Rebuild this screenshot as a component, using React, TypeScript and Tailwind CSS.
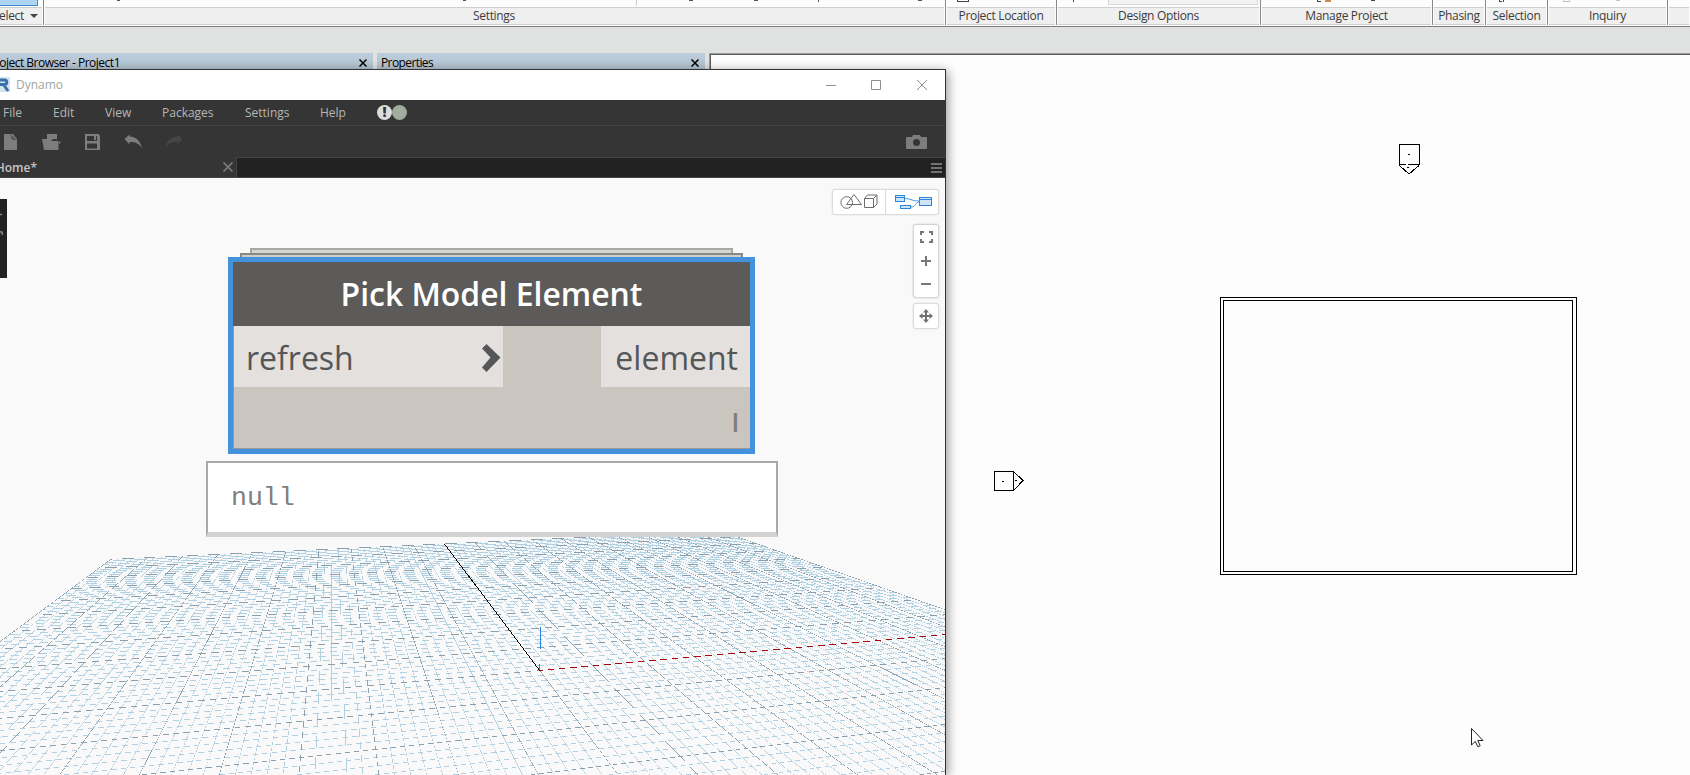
import React from "react";

type Vec3 = [number, number, number];

/* Projection of the ground plane: vanishing directions of both axes and the origin. */
const AXIS_X: Vec3 = [3645 * 0.1747, 395 * 0.1747, 0.1747];
const AXIS_Y: Vec3 = [332.5 * 0.8515, 395 * 0.8515, 0.8515];
const ORIGIN: Vec3 = [539.7, 670.5, 1];
const NEAR = 0.08;

function plane(x: number, y: number): Vec3 {
  const u = x / 50;
  const v = y / 50;
  return [0, 1, 2].map((i) => u * AXIS_X[i] + v * AXIS_Y[i] + ORIGIN[i]) as Vec3;
}

/* A line on the plane as a sliver; edges without smoothing turn it into a stippled line. */
function sliver(a: Vec3, b: Vec3, width: number): string {
  if (a[2] < NEAR && b[2] < NEAR) return "";
  const cut = (p: Vec3, q: Vec3): Vec3 => {
    const t = (NEAR - p[2]) / (q[2] - p[2]);
    return [0, 1, 2].map((i) => p[i] + (q[i] - p[i]) * t) as Vec3;
  };
  const s = a[2] < NEAR ? cut(a, b) : a;
  const e = b[2] < NEAR ? cut(b, a) : b;
  let p = [s[0] / s[2], s[1] / s[2]];
  let q = [e[0] / e[2], e[1] / e[2]];
  const dx = q[0] - p[0];
  const dy = q[1] - p[1];
  const len = Math.hypot(dx, dy);
  const shallow = Math.abs(dx) > Math.abs(dy);
  if (shallow ? dx < 0 : dy < 0) [p, q] = [q, p];
  const ox = shallow ? 0 : (-width * len) / Math.abs(dy);
  const oy = shallow ? (width * len) / Math.abs(dx) : 0;
  const f = (n: number) => n.toFixed(3);
  return `M${f(p[0] - ox / 2)} ${f(p[1] - oy / 2)}L${f(q[0] - ox / 2)} ${f(q[1] - oy / 2)}L${f(q[0] + ox / 2)} ${f(q[1] + oy / 2)}L${f(p[0] + ox / 2)} ${f(p[1] + oy / 2)}z`;
}

function gridLines(major: boolean): string {
  let d = "";
  for (let i = -50; i <= 50; i++) {
    if ((i % 5 === 0) !== major) continue;
    d += sliver(plane(i, 50), plane(i, -50), 0.55);
    d += sliver(plane(-50, i), plane(50, i), 0.55);
  }
  return d;
}

function GroundGrid() {
  return (
    <svg className="absolute left-0 top-0" width="945" height="597" viewBox="0 178 945 597" shapeRendering="crispEdges">
      <path d={gridLines(false)} fill="#b1d0e2" />
      <path d={gridLines(true)} fill="#8b9fac" />
      <path d={sliver(plane(0, 0), plane(0, 50), 0.82)} fill="#000" />
      <path d={sliver(plane(0, 0), plane(50, 0), 0.58)} fill="#a8060c" />
      <path d="M540 627h1v22h-1zM539 664h1v6h-1z" fill="#2b86e0" />
    </svg>
  );
}

function Ribbon() {
  const panels = [
    { label: "Settings", w: "w-[902px]", pad: "pr-[1px]" },
    { label: "Project Location", w: "w-[111px]", pad: "" },
    { label: "Design Options", w: "w-[204px]", pad: "" },
    { label: "Manage Project", w: "w-[172px]", pad: "" },
    { label: "Phasing", w: "w-[53px]", pad: "" },
    { label: "Selection", w: "w-[62px]", pad: "" },
    { label: "Inquiry", w: "w-[120px]", pad: "" },
    { label: "", w: "w-[23px]", pad: "" },
  ];
  return (
    <div className="relative flex h-[27px] border-b border-[#7d7d7d] bg-[#fdfdfd]">
      <div className="flex h-[25px] w-[44px] flex-col border-r border-[#888]">
        <div className="h-[7px]">
          <div className="h-[6px] w-[38px] border-b border-r border-[#3c8acb] bg-[#abd5f0]" />
        </div>
        <div className="mr-px flex h-[18px] items-center justify-end gap-[6px] overflow-hidden whitespace-nowrap border-y border-[#cfcfcf] bg-[#efefef] pr-[4px]">
          <span className="tracking-[-0.3px]">Select</span>
          <svg width="8" height="4" viewBox="0 0 8 4" className="shrink-0"><path d="M0 0h8L4 4z" fill="#444" /></svg>
        </div>
      </div>
      {panels.map((p) => (
        <div key={p.label} className={`flex h-[25px] shrink-0 flex-col justify-end border-r border-[#888] px-px ${p.w}`}>
          <div className={`flex h-[18px] items-center justify-center whitespace-nowrap border-y border-[#cfcfcf] bg-[#efefef] tracking-[-0.32px] ${p.pad}`}>{p.label}</div>
        </div>
      ))}
      <svg className="absolute left-0 top-0" width="1690" height="7" shapeRendering="crispEdges" fill="none">
        <path d="M117 .500h3M463 .500h3M689 .500h4M754 .500h4M818.500 0v2M918 .500h4" stroke="#555" />
        <path d="M636.500 0v6" stroke="#ccc" />
        <path d="M957.500 0v1.500h11v-1.500" stroke="#444" />
        <path d="M1073.500 0v2" stroke="#444" />
        <path d="M1108 0v4.500h149.500v-5" stroke="#d8d8d8" fill="#f3f3f3" />
        <path d="M1317.500 0v1.500h3M1371 .500h4M1499.500 0v1.500h2M1503 0v2" stroke="#444" />
        <path d="M1325 0h6v2h-6z" fill="#c98d4e" />
        <path d="M1563.500 0v1.500h6v-2M1616 .500h4" stroke="#c4c4b4" />
      </svg>
    </div>
  );
}

function CloseGlyph() {
  return (
    <svg width="8" height="8" viewBox="0 0 8 8" className="shrink-0"><path d="M.5.5l7 7M7.500.5l-7 7" stroke="#000" strokeWidth="1.500" /></svg>
  );
}

function DockRow() {
  return (
    <div className="flex min-h-0 flex-1">
      <div className="flex w-[373px] flex-col bg-[#f0f0f0]">
        <div className="flex h-[20px] items-center bg-gradient-to-b from-[#bccddc] to-[#b2c0ce]">
          <div className="flex w-[120px] justify-end overflow-hidden whitespace-nowrap tracking-[-0.5px] text-black">Project Browser - Project1</div>
          <div className="flex-1" />
          <div className="mr-[6px] flex"><CloseGlyph /></div>
        </div>
      </div>
      <div className="ml-[4px] w-[328px] bg-[#f0f0f0]">
        <div className="flex h-[20px] items-center justify-between bg-gradient-to-b from-[#bccddc] to-[#b2c0ce] pl-[4px] pr-[6px] text-black">
          <span className="tracking-[-0.6px]">Properties</span>
          <CloseGlyph />
        </div>
      </div>
      <div className="ml-[4px] flex flex-1 border-l border-t border-[#9a9a9a]">
        <DrawingView />
      </div>
    </div>
  );
}

function DrawingView() {
  return (
    <div className="relative flex-1 overflow-hidden border-l border-t border-[#5c5c5c] bg-[#fdfdfd]">
      <svg className="block" width="979" height="720" viewBox="711 55 979 720" fill="none" stroke="#000" shapeRendering="crispEdges">
        <rect x="1220.500" y="297.500" width="356" height="277" />
        <rect x="1223.500" y="300.500" width="349" height="271" />
        <rect x="1399.500" y="144.500" width="20" height="20" />
        <path d="M1399.500 165.500l9.500 8.500 10-8.500M1408 154.500h2M1407 167.500h2" />
        <path d="M1406 164.500h2" stroke="#fdfdfd" />
        <rect x="994.500" y="471.500" width="19" height="19" />
        <path d="M1014 472l9 8.500-9 9.500M1002 481.500h2M1015 480.500h2" />
        <path
          d="M1471.500 728.500v16.500l3.800-3.600 2.500 5.300 2.400-1-2.400-5.200h5.200z"
          fill="#fff"
          stroke="#222"
          shapeRendering="auto"
        />
      </svg>
    </div>
  );
}

function Toolbar() {
  return (
    <svg className="block" width="945" height="31" viewBox="0 126 945 31" fill="#7c7d7c">
      <path d="M4 134h9l4 5v11H4z" />
      <path d="M10 134l7 6h-5z" fill="#555" />
      <path d="M47 134h10v5h-4l-2 2h-4zM42 139h5l2 2h9.500v9H44zM59 142l2-.5-1.500 3z" />
      <path d="M85 134h13.500l1.500 1.500V150H85z" />
      <path d="M87 136h10v5H87zM87 143.500h10v5H87z" fill="#353535" />
      <path d="M94 136h2v4h-2z" />
      <path d="M124.500 139l5-4.500v2c6 .3 10.500 3.500 12.500 11.500-3-4.500-7-6.300-12.500-6v2.500z" />
      <path d="M182.500 139l-5-4.500v2c-6 .3-10.500 3.500-12.500 11.500 3-4.500 7-6.300 12.500-6v2.500z" fill="#454545" />
      <path d="M907 137h5l1-2h7l1 2h5q1 0 1 1v10q0 1-1 1h-19q-1 0-1-1v-10q0-1 1-1z" />
      <circle cx="916.500" cy="142.500" r="3.500" fill="#353535" />
    </svg>
  );
}

function ViewControls() {
  return (
    <div className="absolute right-[6px] top-[11px] flex flex-col items-end">
      <div className="flex h-[26px] w-[107px] rounded-[3px] border border-[#dcdcdc] bg-white shadow-[0_0_2px_rgba(0,0,0,0.12)]">
        <svg width="105" height="24" viewBox="833 190 105 24" fill="none" stroke="#6d6d6d">
          <circle cx="846.700" cy="202.500" r="5.800" />
          <path d="M846.500 204.500h15l-7.500-10zM864.500 198.500h9v9h-9zM864.500 198.500l3-3.500h9.500v9l-3.500 3.500M873.500 198.500l3.500-3.500" />
          <path d="M885.500 190v24" stroke="#d9d9d9" />
          <g stroke="#2e86dc" shapeRendering="crispEdges">
            <path d="M895.500 195.500h9v6h-9zM900.500 205.500h10v3h-10zM919.500 197.500h12v8h-12z" fill="#cfe5f6" />
            <path d="M895.500 197.500h9M919.500 199.500h12" />
          </g>
          <path d="M905 198.500c6 0 8 3 14 2.500M911 207c5 0 4-4.500 8-5" stroke="#4b9be4" />
        </svg>
      </div>
      <div className="mt-[9px] h-[74px] w-[26px] rounded-[3px] border border-[#d4d4d4] bg-white shadow-[0_0_2px_rgba(0,0,0,0.2)]">
        <svg width="24" height="72" viewBox="914 225 24 72" fill="none" stroke="#777" strokeWidth="2" shapeRendering="crispEdges">
          <path d="M921 235v-3h3M929 232h3v3M932 239v3h-3M924 242h-3v-3" />
          <path d="M921 261h10M926 256v10M921 284h10" />
        </svg>
      </div>
      <div className="mt-[5px] h-[26px] w-[26px] rounded-[3px] border border-[#dcdcdc] bg-white shadow-[0_0_2px_rgba(0,0,0,0.12)]">
        <svg width="24" height="24" viewBox="914 304 24 24">
          <path d="M921 316h10M926 311v10" stroke="#707070" strokeWidth="2" />
          <path d="M926 309l3 3.500h-6zM926 323l3-3.500h-6zM919 316l3.500-3v6zM933 316l-3.500-3v6z" fill="#707070" />
        </svg>
      </div>
    </div>
  );
}

function PickNode() {
  return (
    <>
      <div className="absolute left-[250px] top-[70px] h-[20px] w-[483px] border-2 border-[#a6a8a6] bg-[#d5d6d1]" />
      <div className="absolute left-[240px] top-[75px] h-[20px] w-[503px] border-2 border-[#888986] bg-[#cfcfc9]" />
      <div className="absolute left-[228px] top-[79px] flex h-[197px] w-[527px] flex-col border-[5px] border-[#4392db] bg-[#cac5be]">
        <div className="flex h-[64px] items-center justify-center bg-[#5c5b59] text-[31.9px] font-semibold leading-none text-white">
          <span>Pick Model Element</span>
        </div>
        <div className="flex h-[61px] justify-between border-l border-[#9b9894] text-[32px] leading-none text-[#555658]">
          <div className="flex w-[269px] items-center justify-between bg-[#e4e0dd] pl-[12px] pr-[2px]">
            <span className="pt-[3px]">refresh</span>
            <svg width="19" height="28" viewBox="0 0 19 28" className="mt-[2px]"><path d="M4.500 0L18.500 13.500 4.500 28 0 23.500l8.500-10L0 4.500z" fill="#555658" /></svg>
          </div>
          <div className="flex w-[149px] items-center justify-end bg-[#e4e0dd] pr-[12px] pt-[3px]">element</div>
        </div>
        <div className="flex flex-1 items-center justify-end border-b border-l border-[#9b9894] pr-[11px] pt-[9px] text-[26px] font-semibold leading-none text-[#807c76]">l</div>
      </div>
      <div className="absolute left-[206px] top-[283px] flex h-[76px] w-[572px] items-center border-x-2 border-b-[5px] border-t-2 border-x-[#a9a9a9] border-b-[#d3d3d3] border-t-[#a9a9a9] bg-white pl-[23px] pt-[2px] font-['Liberation_Mono',monospace] text-[26.5px] leading-none text-[#7f7f7f]">
        null
      </div>
    </>
  );
}

function DynamoWindow() {
  const menu = [
    { label: "File", w: "w-[50px]" },
    { label: "Edit", w: "w-[52px]" },
    { label: "View", w: "w-[57px]" },
    { label: "Packages", w: "w-[83px]" },
    { label: "Settings", w: "w-[75px]" },
    { label: "Help", w: "w-[57px]" },
  ];
  return (
    <div className="absolute left-0 top-[69px] flex h-[706px] w-[946px] flex-col border-r border-t border-[#333] shadow-[2px_2px_10px_rgba(0,0,0,0.4)]">
      <div className="flex h-[30px] items-center bg-white">
        <svg width="16" height="16" viewBox="0 0 16 16" className="shrink-0">
          <path d="M0 0h10v15H0z" fill="#d5e4f0" />
          <path d="M0 3h4.500a2 2 0 0 1 0 4.500H0M3.500 7.500L8 14" fill="none" stroke="#3972ab" strokeWidth="3" />
        </svg>
        <span className="flex-1 text-[12px] text-[#a0a6a1]">Dynamo</span>
        <svg width="102" height="12" viewBox="0 0 102 12" fill="none" stroke="#8f8f8f" className="mr-[17px]">
          <path d="M0 6.500h10" />
          <path d="M45.500 1.500h9v9h-9z" />
          <path d="M91 1l10 10M101 1l-10 10" />
        </svg>
      </div>
      <div className="flex h-[26px] items-center border-b border-[#444] bg-[#353535] pl-[3px] text-[12px] text-[#b5b5b5]">
        {menu.map((m) => (
          <span key={m.label} className={m.w}>{m.label}</span>
        ))}
        <div className="-mt-px flex">
          <span className="flex h-[15px] w-[15px] items-center justify-center rounded-full bg-[#dcdcdc] text-[14px] font-extrabold leading-none text-[#333]">!</span>
          <span className="flex h-[15px] w-[15px] items-center justify-center rounded-full bg-[#a1ad9b] text-[11px] leading-none text-[#a9b2ae]">0</span>
        </div>
      </div>
      <div className="h-[31px] bg-[#353535]"><Toolbar /></div>
      <div className="flex h-[21px] border-b border-[#444] bg-[#353535]">
        <div className="flex w-[236px] items-center">
          <div className="flex w-[37px] justify-end overflow-hidden pt-[2px] text-[12px] font-semibold text-[#c6c6c6]">Home*</div>
          <div className="flex-1" />
          <svg width="10" height="10" viewBox="0 0 10 10" className="mr-[3px]"><path d="M.5.500l9 9M9.500.500l-9 9" stroke="#777" strokeWidth="1.800" /></svg>
        </div>
        <div className="flex flex-1 items-center justify-end border-l border-t border-[#444] bg-[#222] pr-[3px]">
          <svg width="11" height="10" viewBox="0 0 11 10"><path d="M0 1h11M0 5h11M0 9h11" stroke="#717371" strokeWidth="2" /></svg>
        </div>
      </div>
      <div className="relative flex-1 overflow-hidden bg-[#f9f9f9]">
        <GroundGrid />
        <div className="absolute left-0 top-[21px] h-[79px] w-[7px] bg-[#222]">
          <svg width="7" height="79" className="block"><path d="M0 15.500h2M0 33q3-1 2 3" fill="none" stroke="#888" strokeWidth="1.500" /></svg>
        </div>
        <PickNode />
        <ViewControls />
      </div>
    </div>
  );
}

export default function App() {
  return (
    <div className="relative flex h-[775px] w-[1690px] flex-col overflow-hidden bg-[#e0e2e1] font-['Open_Sans','Noto_Sans',sans-serif] text-[12px] leading-[16px] text-[#3c3c3c]">
      <Ribbon />
      <div className="h-[26px] shrink-0 bg-[#e0e2e1]" />
      <DockRow />
      <DynamoWindow />
    </div>
  );
}
